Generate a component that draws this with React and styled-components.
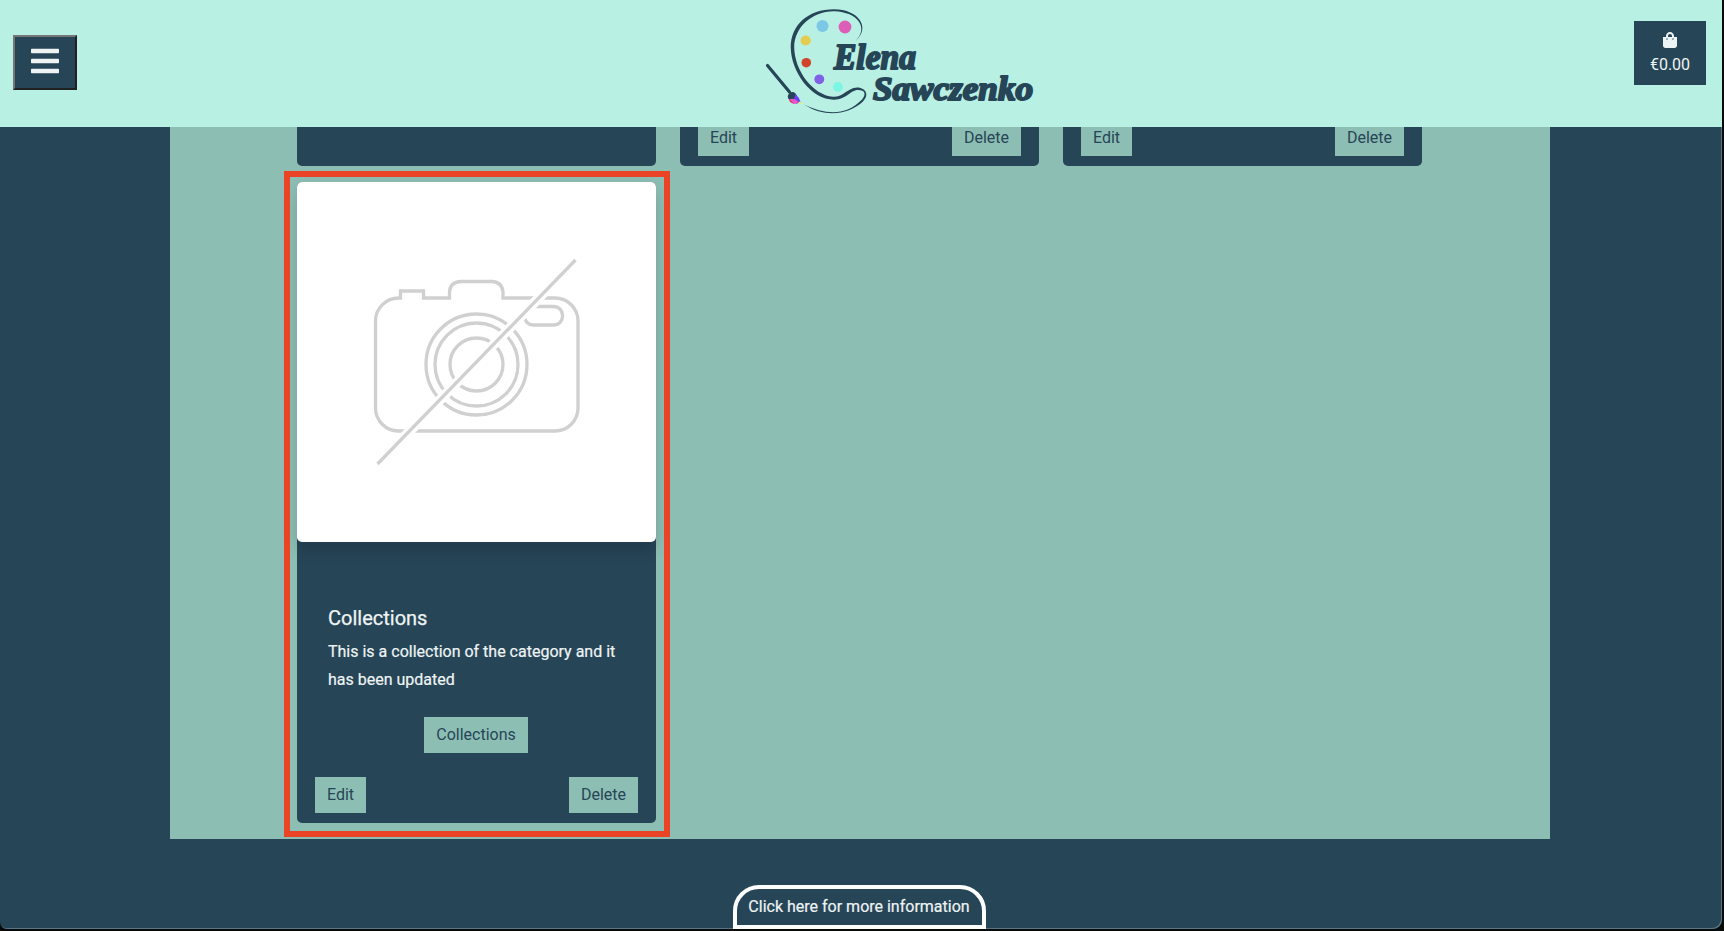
import React from "react";
import styled, { createGlobalStyle } from "styled-components";
import { FaBars, FaShoppingBag } from "react-icons/fa";

const navy = "#264557";
const sage = "#8dbeb3";
const mint = "#b8f1e4";
const light = "#eef4f4";

const GlobalStyle = createGlobalStyle`
  *, *::before, *::after { box-sizing: border-box; }
  html, body { margin: 0; height: 931px; overflow: hidden; background: #080a08; }
  body { font-family: Roboto, "Liberation Sans", sans-serif; font-size: 16px; line-height: 24px; color: ${light}; }
`;

const Page = styled.div`
  width: 1722px;
  height: 929px;
  display: flex;
  flex-direction: column;
  align-items: stretch;
  overflow: hidden;
  background: ${navy};
  border-radius: 0 0 9px 7px;
  box-shadow: inset -1px -1px 0 #587386;
`;

const Header = styled.header`
  flex: none;
  height: 127px;
  padding: 0 16px 0 13px;
  display: grid;
  grid-template-columns: 737px 1fr auto;
  align-items: start;
  background: ${mint};
`;

const MenuButton = styled.button`
  width: 64px;
  height: 55px;
  margin-top: 35px;
  padding: 0 0 3px;
  display: flex;
  align-items: center;
  justify-content: center;
  border: 2px solid;
  border-color: #767676 #212121 #212121 #767676;
  background: ${navy};
  color: ${light};
  font-size: 32px;
`;

const Logo = styled.svg`
  display: block;
  width: 300px;
  height: 127px;
`;

const LogoText = styled.text`
  font-family: "Liberation Serif", serif;
  font-weight: 700;
  font-style: italic;
  fill: ${navy};
  stroke: ${navy};
  stroke-width: 2px;
  stroke-linejoin: round;
`;

const Bag = styled.a`
  width: 72px;
  height: 64px;
  margin-top: 21px;
  padding-top: 11px;
  display: flex;
  flex-direction: column;
  align-items: center;
  background: ${navy};
  line-height: 33px;
`;

const Panel = styled.main`
  flex: none;
  width: 1380px;
  height: 712px;
  margin-left: 170px;
  padding-left: 127px;
  display: flex;
  flex-direction: column;
  gap: 16px;
  background: ${sage};
`;

const Row = styled.div`
  display: flex;
  gap: 24px;
`;

const Card = styled.article`
  position: relative;
  width: 359px;
  height: ${(p) => p.$height}px;
  display: flex;
  flex-direction: column;
  justify-content: flex-end;
  background: ${navy};
  border-radius: ${(p) => (p.$clipped ? "0 0 5px 5px" : "5px")};
  overflow: ${(p) => (p.$clipped ? "hidden" : "visible")};
`;

const Highlight = styled.div`
  position: absolute;
  inset: -11px -14px -14px -13px;
  border: 6px solid #eb4326;
  pointer-events: none;
`;

const Picture = styled.div`
  height: 360px;
  background: #fff;
  border-radius: 5px;
  box-shadow: 0 8px 16px rgba(0, 0, 0, 0.16);
  svg { display: block; }
`;

const Body = styled.div`
  flex: 1;
  padding: 64px 32px 0 31px;
  display: flex;
  flex-direction: column;
`;

const Title = styled.h5`
  margin: 0 0 8px;
  font-size: 20px;
  line-height: 24px;
  font-weight: 400;
  -webkit-text-stroke: 0.25px ${light};
`;

const Description = styled.p`
  margin: 0 -8px 23px 0;
  line-height: 28px;
  -webkit-text-stroke: 0.2px ${light};
`;

const Button = styled.button`
  flex: none;
  width: ${(p) => p.$width}px;
  height: 36px;
  padding: 0;
  border: 0;
  align-self: ${(p) => (p.$center ? "center" : "auto")};
  background: ${sage};
  color: ${navy};
  font: 400 16px/36px Roboto, sans-serif;
`;

const Actions = styled.div`
  flex: none;
  display: flex;
  justify-content: space-between;
  padding: 0 18px 10px;
`;

const InfoTab = styled.button`
  align-self: center;
  flex: none;
  width: 253px;
  height: 44px;
  margin: auto 4px 0 0;
  padding: 0;
  border: 4px solid #fff;
  border-radius: 26px 26px 0 0;
  background: ${navy};
  color: ${light};
  font: 400 16px/34px Roboto, sans-serif;
  -webkit-text-stroke: 0.2px ${light};
`;

const dots = [
  [72.5, 26, 6, "#7bc7e5"],
  [95, 27, 6.4, "#dc5eb6"],
  [55.7, 40.5, 5.1, "#e5cb50"],
  [56.3, 62.7, 4.8, "#d1432b"],
  [69.3, 79.3, 4.9, "#8060e4"],
  [88, 87, 4.9, "#7bf6e4"],
];

function Brand() {
  return (
    <Logo viewBox="0 0 300 127" aria-label="Elena Sawczenko">
      <path
        d="M105.500 41C121 28 109 9.300 84 9.300C58 9.300 41 25 40.700 47C41 72 61 99.500 84 99.700C97 99.500 100 90 108 90C115 90 116.500 94 112 99.500C96 116 76 115 54 104.500C75 118 98 115 113 101.500C120 94 115 87.500 107 87.500C97 88 94 97 83 96.800C63 95 44.500 71 44.200 47C44.500 28 61 11.500 84 11.300C108 12 119 28 105.500 41Z"
        fill={navy}
      />
      {dots.map(([cx, cy, r, fill]) => (
        <circle key={fill} cx={cx} cy={cy} r={r} fill={fill} />
      ))}
      <path d="M17.500 65.500L39.500 92" stroke={navy} strokeWidth="3.200" strokeLinecap="round" />
      <circle cx="42.300" cy="96.600" r="4.500" fill={navy} />
      <path d="M45.500 94Q49 97 50.500 102L46 104L44 99Z" fill="#6a42f2" />
      <path d="M39 99.500Q44 97 48.500 102Q44 105.500 41 102.500Z" fill="#ed55ca" />
      <path d="M39 99L44 103.500L40 102Z" fill="#d83445" />
      <path d="M49 101.500L53 103.500L48 104.500Z" fill="#e9ec80" />
      <LogoText x="84" y="69" fontSize="35" textLength="82" lengthAdjust="spacingAndGlyphs">Elena</LogoText>
      <LogoText x="123" y="100" fontSize="33" textLength="160" lengthAdjust="spacingAndGlyphs">Sawczenko</LogoText>
    </Logo>
  );
}

function NoPhoto() {
  return (
    <Picture>
      <svg width="359" height="360" viewBox="0 0 359 360" fill="none" stroke="#d0d0d0" strokeWidth="3.300">
        <path d="M102 116H103.500V109H126.500V116H152.500V110Q153 100 164 99.500H195Q205 100 206 110V116H258A23 23 0 0 1 281 139V226A23 23 0 0 1 258 249H101.500A23 23 0 0 1 78.500 226V139A23 23 0 0 1 102 116Z" />
        <circle cx="179.500" cy="182.500" r="50.500" />
        <circle cx="179.500" cy="182.500" r="41.500" />
        <circle cx="179.500" cy="182.500" r="26.500" />
        <rect x="227.500" y="124.500" width="38" height="18.500" rx="8.500" />
        <path d="M81 282L278.500 78" stroke="#fff" strokeWidth="10" />
        <path d="M80.500 282L278.500 78" />
      </svg>
    </Picture>
  );
}

function CardActions() {
  return (
    <Actions>
      <Button $width={51}>Edit</Button>
      <Button $width={69}>Delete</Button>
    </Actions>
  );
}

export default function App() {
  return (
    <>
      <GlobalStyle />
      <Page>
        <Header>
          <MenuButton aria-label="Menu"><FaBars /></MenuButton>
          <Brand />
          <Bag><FaShoppingBag size={16} /><span>€0.00</span></Bag>
        </Header>
        <Panel>
          <Row>
            <Card $height={39} $clipped />
            <Card $height={39} $clipped><CardActions /></Card>
            <Card $height={39} $clipped><CardActions /></Card>
          </Row>
          <Row>
            <Card $height={641}>
              <NoPhoto />
              <Body>
                <Title>Collections</Title>
                <Description>This is a collection of the category and it has been updated</Description>
                <Button $width={104} $center>Collections</Button>
              </Body>
              <CardActions />
              <Highlight />
            </Card>
          </Row>
        </Panel>
        <InfoTab>Click here for more information</InfoTab>
      </Page>
    </>
  );
}
